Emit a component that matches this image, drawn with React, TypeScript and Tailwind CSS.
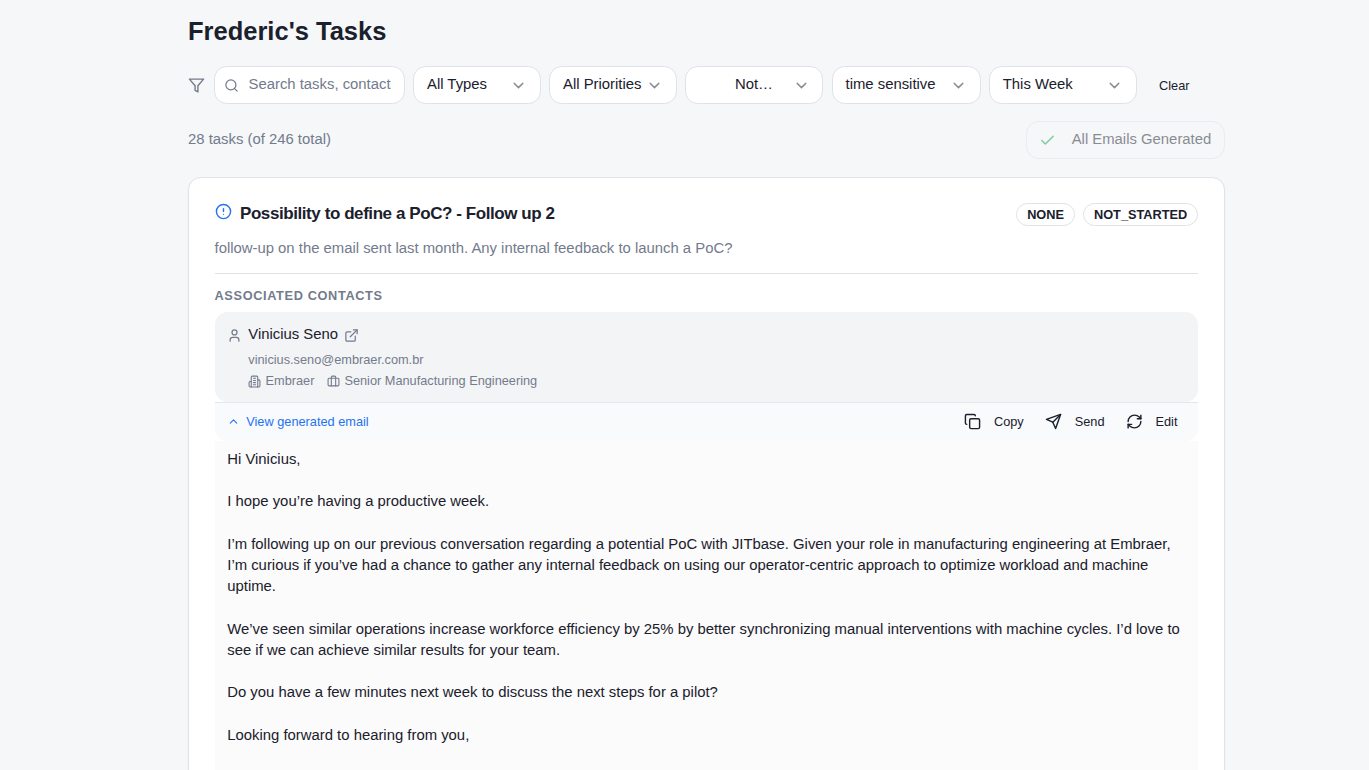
import type { ReactNode } from "react";
import {
  Briefcase,
  Check,
  ChevronDown,
  ChevronUp,
  CircleAlert,
  Copy,
  ExternalLink,
  RefreshCw,
  Search,
  User,
} from "lucide-react";

type IconProps = { className?: string };

function LineIcon({ className, children }: IconProps & { children: ReactNode }) {
  return (
    <svg
      className={className}
      viewBox="0 0 24 24"
      fill="none"
      stroke="currentColor"
      strokeWidth="2"
      strokeLinecap="round"
      strokeLinejoin="round"
    >
      {children}
    </svg>
  );
}

const FilterIcon = ({ className }: IconProps) => (
  <LineIcon className={className}>
    <polygon points="22 3 2 3 10 12.46 10 19 14 21 14 12.46 22 3" />
  </LineIcon>
);

const SendIcon = ({ className }: IconProps) => (
  <LineIcon className={className}>
    <path d="m22 2-7 20-4-9-9-4Z" />
    <path d="M22 2 11 13" />
  </LineIcon>
);

const BuildingIcon = ({ className }: IconProps) => (
  <LineIcon className={className}>
    <path d="M6 22V4a2 2 0 0 1 2-2h8a2 2 0 0 1 2 2v18Z" />
    <path d="M6 12H4a2 2 0 0 0-2 2v6a2 2 0 0 0 2 2h2" />
    <path d="M18 9h2a2 2 0 0 1 2 2v9a2 2 0 0 1-2 2h-2" />
    <path d="M10 6h4M10 10h4M10 14h4M10 18h4" />
  </LineIcon>
);

const filters = [
  { label: "All Types", className: "w-[127.5px]" },
  { label: "All Priorities", className: "w-[127.5px]" },
  { label: "Not…", className: "w-[138px]", labelClassName: "pl-[36px]" },
  { label: "time sensitive", className: "w-35" },
  { label: "This Week", className: "w-[148px]" },
];

const emailActions = [
  { label: "Copy", icon: Copy },
  { label: "Send", icon: SendIcon },
  { label: "Edit", icon: RefreshCw },
];

const emailBody = `Hi Vinicius,

I hope you’re having a productive week.

I’m following up on our previous conversation regarding a potential PoC with JITbase. Given your role in manufacturing engineering at Embraer, I’m curious if you’ve had a chance to gather any internal feedback on using our operator-centric approach to optimize workload and machine uptime.

We’ve seen similar operations increase workforce efficiency by 25% by better synchronizing manual interventions with machine cycles. I’d love to see if we can achieve similar results for your team.

Do you have a few minutes next week to discuss the next steps for a pilot?

Looking forward to hearing from you,`;

function FilterBar() {
  return (
    <div className="flex items-center gap-2 h-9">
      <FilterIcon className="w-4 h-4 text-[#737b8c] shrink-0" />
      <div className="flex items-center w-45 h-9 pl-[9.5px] pr-3 rounded-xl border border-[#dfe2e8] bg-white">
        <Search className="w-[15px] h-[15px] text-[#737b8c] shrink-0" />
        <input
          className="ml-[9.5px] w-full min-w-0 text-sm outline-none placeholder:text-[#737b8c]"
          placeholder="Search tasks, contacts..."
        />
      </div>
      {filters.map((filter) => (
        <button
          key={filter.label}
          className={`flex items-center justify-between h-9 px-3 rounded-xl border border-[#dfe2e8] bg-white text-sm whitespace-nowrap shrink-0 ${filter.className}`}
        >
          <span className={filter.labelClassName}>{filter.label}</span>
          <ChevronDown className="w-4 h-4 opacity-50 shrink-0" />
        </button>
      ))}
      <button className="px-[13.5px] pt-[2px] text-xs">Clear</button>
    </div>
  );
}

function Contact() {
  return (
    <div className="mt-[7px] h-[90px] rounded-xl bg-[#f3f4f6] px-3 pt-3">
      <div className="flex items-center h-[21px]">
        <User className="w-[15px] h-[15px] text-[#737b8c]" />
        <span className="ml-[6px] -mt-[2px] text-sm">Vinicius Seno</span>
        <ExternalLink className="ml-[6px] w-[15px] h-[15px] text-[#737b8c]" />
      </div>
      <div className="ml-[21px] mt-[6px] text-xs text-[#737b8c]">vinicius.seno@embraer.com.br</div>
      <div className="ml-[21px] mt-1 flex items-center text-xs text-[#737b8c]">
        <BuildingIcon className="w-[13px] h-[13px] mr-1" />
        Embraer
        <Briefcase className="w-[13px] h-[13px] ml-3 mr-1" />
        Senior Manufacturing Engineering
      </div>
    </div>
  );
}

function GeneratedEmail() {
  return (
    <div>
      <div className="flex items-center justify-between h-[39px] pl-3 pr-[20.5px] rounded-b-xl border-t border-[#e3e6ea] bg-[#f8fafc]">
        <button className="flex items-center gap-[6px] text-xs text-[#2472f2]">
          <ChevronUp className="w-[13px] h-[13px]" />
          <span className="pt-[1px]">View generated email</span>
        </button>
        <div className="flex items-center gap-5 text-xs">
          {emailActions.map(({ label, icon: Icon }) => (
            <button key={label} className="flex items-center gap-3">
              <Icon className="w-[17px] h-[17px] -mt-[1px]" />
              <span className="pt-[1px]">{label}</span>
            </button>
          ))}
        </div>
      </div>
      <div className="px-3 pt-[7.6px] pb-12 bg-[#fbfbfb] text-sm whitespace-pre-wrap">{emailBody}</div>
    </div>
  );
}

export default function App() {
  return (
    <div className="h-screen overflow-hidden bg-[#f5f7f9] pl-[188px] text-[#1a202c] font-['Liberation_Sans',sans-serif] [--spacing:4.25px] [--text-xs:12.75px] [--text-sm:14.875px] [--text-base:17px] [--text-2xl:25.5px] [--radius-xl:12.75px]">
      <div className="w-[1037px] pt-[15px]">
        <h1 className="text-2xl font-bold mb-[17px]">Frederic's Tasks</h1>
        <FilterBar />

        <div className="flex items-center justify-between mt-4">
          <p className="-mt-[2px] text-sm text-[#737b8c]">28 tasks (of 246 total)</p>
          <button className="flex items-center h-9 pl-[12px] pr-3 rounded-xl border border-[#dfe2e8] text-sm opacity-50">
            <Check className="w-4 h-4 text-green-600 mr-[15.5px]" />
            <span className="-mt-[2px]">All Emails Generated</span>
          </button>
        </div>

        {/* Task card */}
        <div className="mt-[18px] p-6 rounded-xl border border-[#dfe2e8] bg-white shadow-xs">
          <div className="flex items-start justify-between -mt-[0.25px]">
            <div className="flex items-start gap-2">
              <CircleAlert className="-mt-[1px] w-[17px] h-[17px] text-[#2472f2]" />
              <h2 className="text-base font-bold tracking-tight leading-[19px]">
                Possibility to define a PoC? - Follow up 2
              </h2>
            </div>
            <div className="flex gap-[8px] -mt-[0.5px] mr-[0.25px] text-xs font-bold">
              <span className="px-[10px] pt-[2.5px] pb-[1.5px] rounded-full border border-[#dfe2e8]">NONE</span>
              <span className="px-[10px] pt-[2.5px] pb-[1.5px] rounded-full border border-[#dfe2e8]">NOT_STARTED</span>
            </div>
          </div>
          <p className="mt-[11.5px] text-sm text-[#737b8c]">
            follow-up on the email sent last month. Any internal feedback to launch a PoC?
          </p>

          <div className="mt-[14.25px] mr-[0.5px] pt-[13.75px] border-t border-[#dfe2e8]">
            <h3 className="text-xs font-bold tracking-wider text-[#737b8c]">ASSOCIATED CONTACTS</h3>
            <Contact />
            <GeneratedEmail />
          </div>
        </div>
      </div>
    </div>
  );
}
